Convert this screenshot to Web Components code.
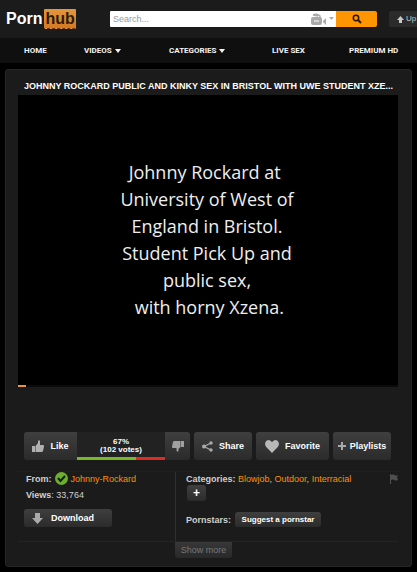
<!DOCTYPE html>
<html lang="en">
<head>
<meta charset="utf-8">
<meta name="viewport" content="width=device-width, initial-scale=1">
<title>Video page</title>
<style>
    body {
        margin: 0;
        background: #000;
        color: #d0d0d0;
        font: 9px/12px "Liberation Sans", Arial, sans-serif;
        overflow-x: hidden;
    }
</style>
</head>
<body>
<site-header></site-header>
<site-nav></site-nav>
<main>
    <video-panel heading="JOHNNY ROCKARD PUBLIC AND KINKY SEX IN BRISTOL WITH UWE STUDENT XZE...">
        <video-player slot="player" progress="2"></video-player>
        <action-bar slot="actions"></action-bar>
        <video-details slot="details"></video-details>
    </video-panel>
</main>

<script>
/**
 * Small base class: every component clones its static markup
 * into an open shadow root.
 */
class BaseElement extends HTMLElement {
    constructor() {
        super();
        this.attachShadow({ mode: 'open' });
    }

    connectedCallback() {
        this.shadowRoot.innerHTML = this.template();
    }
}

// Top bar: logo, search form, upload button
class SiteHeader extends BaseElement {
    template() {
        return `
        <style>
            :host {
                display: flex;
                align-items: center;
                height: 38px;
                padding-left: 6px;
                background: #1b1b1b;
                overflow: hidden;
            }
            .logo {
                display: flex;
                align-items: center;
                width: 104px;
                color: #fff;
                font: bold 16px/20px "Liberation Sans", Arial, sans-serif;
                text-decoration: none;
            }
            .logo b {
                padding: 0 1px;
                margin-left: 2px;
                border-radius: 1px;
                background: linear-gradient(#e5963c, #d57a24);
                color: #2c1a0b;
                border-bottom: 1px dashed #6d360b;
                line-height: 19px;
            }
            form {
                display: flex;
                flex: 1;
                height: 16px;
                margin-right: 12px;
            }
            .field {
                display: flex;
                flex: 1;
                align-items: center;
                background: #fff;
                border-radius: 1px 0 0 1px;
            }
            input {
                flex: 1;
                min-width: 0;
                padding: 0 3px;
                border: 0;
                outline: 0;
                background: none;
                font: 9px/12px "Liberation Sans", Arial, sans-serif;
            }
            input::placeholder { color: #9a9a9a; opacity: 1; }
            button {
                display: flex;
                align-items: center;
                justify-content: center;
                padding: 0;
                border: 0;
            }
            .type { width: 26px; background: none; }
            .go { width: 41px; background: #ff9500; border-radius: 0 2px 2px 0; }
            .upload {
                justify-content: flex-start;
                gap: 2px;
                width: 28px;
                height: 16px;
                padding-left: 8px;
                background: #2b2b2b;
                border-radius: 2px 0 0 2px;
                color: #c8c8c8;
                font: 8px/12px "Liberation Sans", Arial, sans-serif;
            }
            .upload svg { flex: none; }
        </style>
        <a class="logo" href="#">Porn<b>hub</b></a>
        <form role="search">
            <div class="field">
                <input type="text" placeholder="Search..." aria-label="Search">
                <button class="type" type="button" aria-label="Search type">
                    <svg width="24" height="13" viewBox="0 0 24 13" fill="#aaa">
                        <path d="M2 2 Q6 0 9 3 L9 5 M2 2 L7 3" fill="none" stroke="#aaa" stroke-width="1.500"/>
                        <rect y="4" width="11" height="8" rx="2"/>
                        <path d="M12 8l3-3v7l-3-3z"/>
                        <path d="M3 8h5" stroke="#fff"/>
                        <path d="M18 4h5l-2.500 3z"/>
                    </svg>
                </button>
            </div>
            <button class="go" type="button" aria-label="Go">
                <svg width="10" height="10" viewBox="0 0 10 10" fill="none" stroke="#2a1500">
                    <circle cx="4" cy="4" r="2.700" stroke-width="1.500"/>
                    <path d="M6 6l3 3" stroke-width="2"/>
                </svg>
            </button>
        </form>
        <button class="upload">
            <svg width="7" height="7" viewBox="0 0 7 7" fill="#c8c8c8"><path d="M3.500 0L7 4H5v3H2V4H0z"/></svg>
            <span>Up</span>
        </button>`;
    }
}

// Main menu
class SiteNav extends BaseElement {
    template() {
        return `
        <style>
            :host {
                display: block;
                background: #0f0f0f;
            }
            nav {
                display: grid;
                grid-template-columns: 60fr 85fr 103fr 77fr 68fr;
                padding-left: 24px;
                height: 25px;
                align-items: center;
            }
            a {
                display: flex;
                align-items: center;
                gap: 3px;
                color: #f4f4f4;
                font: bold 8px/12px Roboto, sans-serif;
                text-decoration: none;
                white-space: nowrap;
            }
            .more::after {
                content: "";
                border: 3px solid transparent;
                border-top: 4px solid #f4f4f4;
                border-bottom: 0;
            }
        </style>
        <nav>
            <a href="#">HOME</a>
            <a href="#" class="more">VIDEOS</a>
            <a href="#" class="more">CATEGORIES</a>
            <a href="#">LIVE SEX</a>
            <a href="#">PREMIUM HD</a>
        </nav>`;
    }
}

// Card that holds the title, the player, the actions and the details
class VideoPanel extends BaseElement {
    template() {
        return `
        <style>
            :host {
                display: block;
                margin: 6px 5px;
                padding: 10px 13px 8px 12px;
                border: 1px solid #262626;
                border-radius: 3px;
                background: #1b1b1b;
            }
            h1 {
                margin: 0 0 3px;
                padding-left: 6px;
                color: #fff;
                font: bold 9px/12px "Liberation Sans", Arial, sans-serif;
                white-space: nowrap;
            }
        </style>
        <h1>${this.getAttribute('heading')}</h1>
        <slot name="player"></slot>
        <slot name="actions"></slot>
        <slot name="details"></slot>`;
    }
}

class VideoPlayer extends BaseElement {
    template() {
        return `
        <style>
            :host { display: block; background: #000; }
            .screen {
                display: flex;
                flex-direction: column;
                align-items: center;
                justify-content: center;
                box-sizing: border-box;
                aspect-ratio: 380 / 290;
                padding-right: 2px;
                color: #eee;
                font: 18px/27px "Open Sans", "Noto Sans", sans-serif;
                white-space: pre;
            }
            .track { height: 2px; background: #0a0a0a; }
            .played { height: 2px; background: #e8943c; }
        </style>
        <div class="screen"><span>Johnny Rockard at </span><span>University of West of</span><span>England in Bristol.</span><span>Student Pick Up and</span><span>public sex,</span><span> with horny Xzena.</span></div>
        <div class="track"><div class="played" style="width: ${this.getAttribute('progress')}%"></div></div>`;
    }
}

// Dark gradient button, icon goes in the "icon" slot
class DarkButton extends BaseElement {
    template() {
        return `
        <style>
            :host { display: inline-flex; }
            button {
                display: flex;
                flex: 1;
                align-items: center;
                justify-content: var(--justify, center);
                gap: var(--gap, 6px);
                height: var(--height, 28px);
                padding: 0 var(--pad, 0);
                border: 0;
                border-radius: var(--radius, 3px);
                background: linear-gradient(#3f3f3f, #2b2b2b);
                color: #fff;
                font: bold var(--size, 9px)/12px "Liberation Sans", Arial, sans-serif;
                white-space: nowrap;
            }
        </style>
        <button aria-label="${this.getAttribute('label') || this.textContent.trim()}"><slot name="icon"></slot><slot></slot></button>`;
    }
}

class VoteMeter extends BaseElement {
    template() {
        const percent = this.getAttribute('percent');
        return `
        <style>
            :host {
                display: flex;
                flex-direction: column;
                justify-content: flex-end;
                flex: 1;
                background: #222;
                color: #fff;
                font: bold 8px/8px "Liberation Sans", Arial, sans-serif;
                text-align: center;
            }
            .bar { display: flex; height: 3px; margin-top: 3px; background: #e02a26; }
            .bar div { background: #79b82a; }
        </style>
        <div>${percent}%</div>
        <div>(${this.getAttribute('votes')} votes)</div>
        <div class="bar"><div style="width: ${percent}%"></div></div>`;
    }
}

class ActionBar extends BaseElement {
    template() {
        return `
        <style>
            :host {
                display: flex;
                gap: 4px;
                margin: 45px 7px 11px 6px;
            }
            .vote { display: flex; flex: 1; }
            .like { width: 53px; --radius: 3px 0 0 3px; }
            .dislike { width: 25px; --radius: 0 3px 3px 0; }
            .share, .lists { width: 58px; }
            .favorite { width: 73px; }
            .lists { --gap: 4px; }
        </style>
        <div class="vote">
            <dark-button class="like">
                <svg slot="icon" width="12" height="12" viewBox="0 0 12 12" fill="#b0b0b0"><path d="M0 6h3v6H0zM3.500 6L6 3V1q1.500-1.500 2 .5V5h3.200q1 .3.8 1.500L11 11q-.3 1-1.500 1h-6z"/></svg>Like
            </dark-button>
            <vote-meter percent="67" votes="102"></vote-meter>
            <dark-button class="dislike" label="Dislike">
                <svg slot="icon" width="12" height="12" viewBox="0 0 12 12" fill="#a0a0a0"><path d="M12 1H9v6h3zM8.500 7L6.500 9v2q-1.500 1.500-2-.5V8H.8Q-.2 7.700 0 6.500L1 2q.3-1 1.500-1h6z"/></svg>
            </dark-button>
        </div>
        <dark-button class="share">
            <svg slot="icon" width="11" height="11" viewBox="0 0 11 11" fill="#aaa"><path d="M9 2L2 5.500L9 9" fill="none" stroke="#aaa" stroke-width="1.300"/><circle cx="9" cy="2" r="1.700"/><circle cx="2" cy="5.500" r="2"/><circle cx="9" cy="9" r="1.700"/></svg>Share
        </dark-button>
        <dark-button class="favorite">
            <svg slot="icon" width="14" height="13" viewBox="0 0 14 13" fill="#b8b8b8"><path d="M7 13L1.200 7Q-.6 4.500.5 2Q2-.3 4.500.2Q6.200.6 7 2.300Q7.800.6 9.500.2Q12-.3 13.500 2Q14.600 4.500 12.800 7z"/></svg>Favorite
        </dark-button>
        <dark-button class="lists">
            <svg slot="icon" width="8" height="8" viewBox="0 0 8 8" stroke="#aaa" stroke-width="2"><path d="M4 0v8M0 4h8"/></svg>Playlists
        </dark-button>`;
    }
}

// Uploader and views on the left, categories and pornstars on the right
class VideoDetails extends BaseElement {
    template() {
        return `
        <style>
            :host { display: block; border-top: 1px solid #202020; }
            .columns, .footer {
                display: grid;
                grid-template-columns: 157fr 223fr;
            }
            .columns { border-bottom: 1px solid #242424; }
            .left, .right {
                display: flex;
                flex-direction: column;
                align-items: flex-start;
            }
            .left { padding: 0 0 14px 8px; }
            .right { padding-left: 10px; border-left: 1px solid #303030; }
            .line { display: flex; align-items: center; }
            .from { gap: 3px; height: 13px; }
            .views { height: 20px; }
            .categories { width: 100%; height: 13px; }
            .categories span { flex: 1; white-space: nowrap; }
            .stars { gap: 4px; margin-top: 11px; }
            a { color: #ff9000; text-decoration: none; }
            .download {
                width: 88px;
                margin: 4px 0 0 -2px;
                --height: 18px;
                --gap: 8px;
                --justify: flex-start;
                --pad: 8px;
            }
            .add { width: 19px; --height: 16px; margin-left: 1px; --size: 12px; }
            .suggest { width: 86px; --height: 15px; --size: 8px; }
            .flag { border: 0; padding: 0; background: none; }
            .flag svg { display: block; }
            .more {
                grid-column: 2;
                width: 57px;
                height: 16px;
                padding: 0;
                border: 0;
                border-radius: 0 0 3px 3px;
                background: linear-gradient(#373737, #292929);
                color: #777;
                font: 9px/12px "Liberation Sans", Arial, sans-serif;
            }
        </style>
        <div class="columns">
            <div class="left">
                <div class="line from">
                    <b>From:</b>
                    <svg width="13" height="13" viewBox="0 0 13 13"><circle cx="6.500" cy="6.500" r="6.500" fill="#6fae2c"/><path d="M3 6l2.500 3L10 4" fill="none" stroke="#10200a" stroke-width="2"/></svg>
                    <a href="#">Johnny-Rockard</a>
                </div>
                <div class="line views"><b>Views</b>: 33,764</div>
                <dark-button class="download">
                    <svg slot="icon" width="11" height="11" viewBox="0 0 11 11" fill="#aaa"><path d="M3 0h5v5h3L5.500 11L0 5h3z"/></svg>Download
                </dark-button>
            </div>
            <div class="right">
                <div class="line categories">
                    <span><b>Categories:</b> <a href="#">Blowjob</a>, <a href="#">Outdoor</a>, <a href="#">Interracial</a></span>
                    <button class="flag" aria-label="Flag video">
                        <svg width="8" height="10" viewBox="0 0 8 10" fill="#505050"><path d="M0 0h1v10H0zM1 1q2-1 3.500 0T8 1L7 3.500L8 6Q6 7 4.500 6T1 6z"/></svg>
                    </button>
                </div>
                <dark-button class="add">+</dark-button>
                <div class="line stars">
                    <b>Pornstars:</b>
                    <dark-button class="suggest">Suggest a pornstar</dark-button>
                </div>
            </div>
        </div>
        <div class="footer"><button class="more">Show more</button></div>`;
    }
}

customElements.define('site-header', SiteHeader);
customElements.define('site-nav', SiteNav);
customElements.define('video-panel', VideoPanel);
customElements.define('video-player', VideoPlayer);
customElements.define('dark-button', DarkButton);
customElements.define('vote-meter', VoteMeter);
customElements.define('action-bar', ActionBar);
customElements.define('video-details', VideoDetails);
</script>
</body>
</html>
